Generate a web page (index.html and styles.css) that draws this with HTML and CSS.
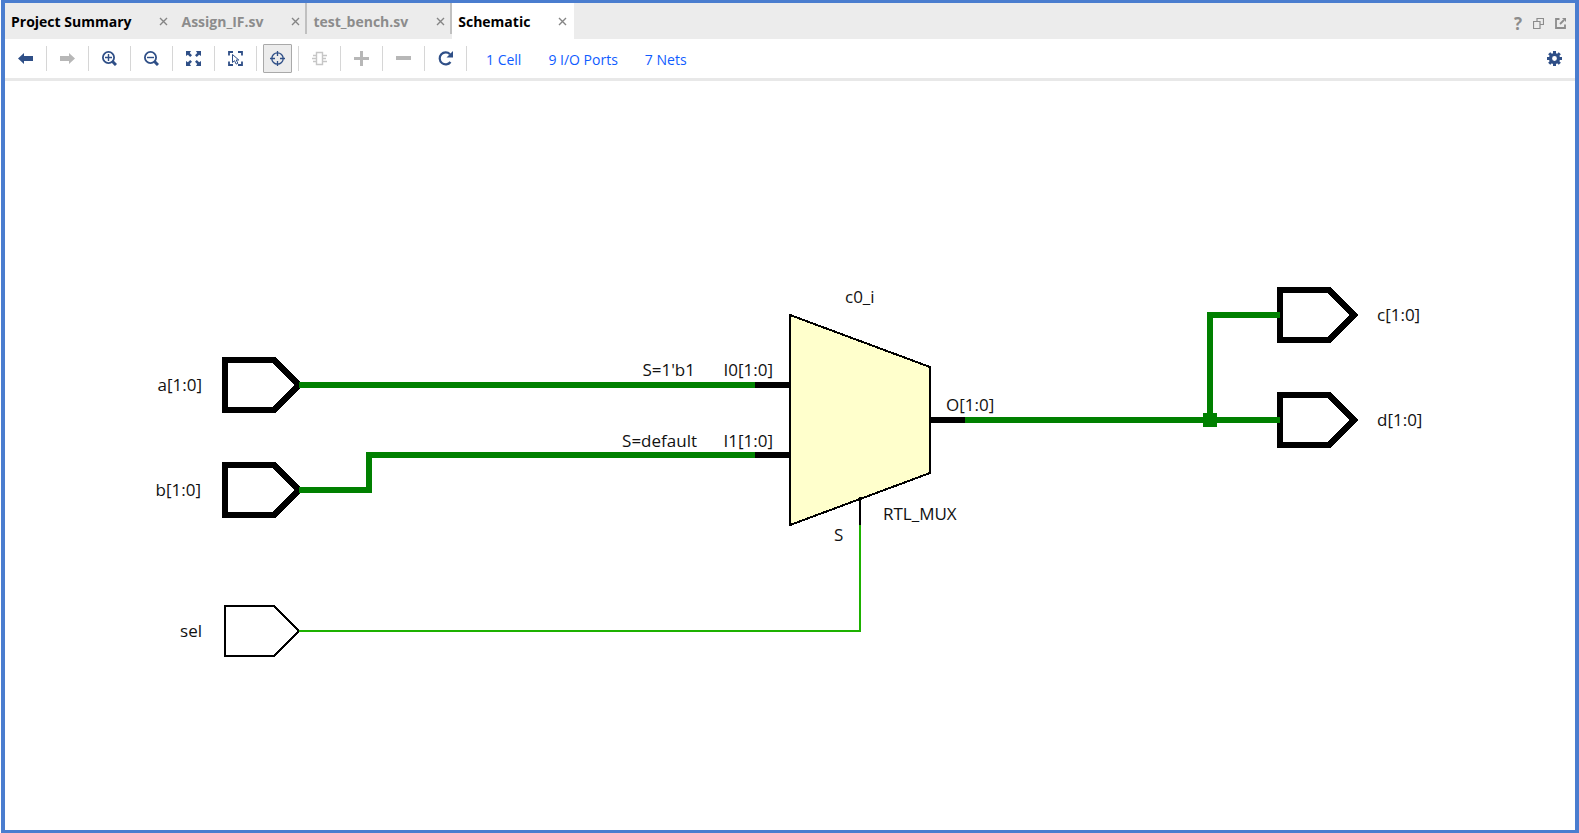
FILE: index.html
```html
<!DOCTYPE html>
<html lang="en">
<head>
<meta charset="utf-8">
<title>Schematic</title>
<link rel="stylesheet" href="styles.css">
</head>
<body>
<main class="window">
  <header class="tabbar">
    <nav class="tabs" aria-label="Open views">
      <div class="tab tab-strong"><a class="tab-name" href="#summary">Project Summary</a><button class="close" aria-label="Close Project Summary"><svg viewBox="0 0 9 9"><path d="M1 1l7 7M8 1l-7 7"/></svg></button></div>
      <div class="tab tab-ruled"><a class="tab-name" href="#assign">Assign_IF.sv</a><button class="close" aria-label="Close Assign_IF.sv"><svg viewBox="0 0 9 9"><path d="M1 1l7 7M8 1l-7 7"/></svg></button></div>
      <div class="tab tab-ruled"><a class="tab-name" href="#bench">test_bench.sv</a><button class="close" aria-label="Close test_bench.sv"><svg viewBox="0 0 9 9"><path d="M1 1l7 7M8 1l-7 7"/></svg></button></div>
      <div class="tab tab-strong tab-active"><a class="tab-name" href="#schematic" aria-current="page">Schematic</a><button class="close" aria-label="Close Schematic"><svg viewBox="0 0 9 9"><path d="M1 1l7 7M8 1l-7 7"/></svg></button></div>
    </nav>
    <div class="window-actions">
      <button class="plain help" aria-label="Help">?</button>
      <button class="plain" aria-label="Float"><svg class="small-icon" viewBox="0 0 11 11"><path class="thin" d="M4 3.500V.5h6.500v6H7.500M.5 3.500h6.500v7h-6.500z"/></svg></button>
      <button class="plain" aria-label="Maximize"><svg class="small-icon" viewBox="0 0 11 11"><path class="mid" d="M4.500 1H1v9h9V6.500"/><path class="mid" d="M5 6l4-4"/><path class="solid" d="M7 0h4v4z"/></svg></button>
    </div>
  </header>

  <div class="toolbar" role="toolbar" aria-label="Schematic tools">
    <button class="tool" aria-label="Back"><svg viewBox="0 0 15 15"><path class="solid" d="M0 7.500L6 2v3h9v5H6v3z"/></svg></button>
    <span class="rule"></span>
    <button class="tool" aria-label="Forward" disabled><svg viewBox="0 0 15 15"><path class="solid" d="M15 7.500L9 2v3H0v5h9v3z"/></svg></button>
    <span class="rule"></span>
    <button class="tool" aria-label="Zoom in"><svg viewBox="0 0 15 15"><circle cx="6.500" cy="6.500" r="5.600" stroke-width="1.800"/><path d="M3 6.500h7M6.500 3v7" stroke-width="1.400"/><path d="M10.500 10.500l3.500 3.500" stroke-width="3"/></svg></button>
    <span class="rule"></span>
    <button class="tool" aria-label="Zoom out"><svg viewBox="0 0 15 15"><circle cx="6.500" cy="6.500" r="5.600" stroke-width="1.800"/><path d="M3 6.500h7" stroke-width="1.400"/><path d="M10.500 10.500l3.500 3.500" stroke-width="3"/></svg></button>
    <span class="rule"></span>
    <button class="tool" aria-label="Zoom fit"><svg viewBox="0 0 15 15"><path class="solid" d="M0 0h5L3.800 1.900 6 4.200 4.200 6 1.900 3.800 0 5zM15 0h-5l1.200 1.900L9 4.200 10.800 6l2.300-2.200L15 5zM0 15h5l-1.200-1.900L6 10.800 4.200 9l-2.300 2.200L0 10zM15 15h-5l1.200-1.900L9 10.800 10.800 9l2.300 2.200L15 10z"/></svg></button>
    <span class="rule"></span>
    <button class="tool" aria-label="Zoom to selection"><svg viewBox="0 0 15 15"><path d="M1 4.500V1h4M10 1h4v3.500M1 10.500V14h4M10 14h4v-3.500" stroke-width="1.800"/><path d="M4.500 3.500v8l2-1.800 1.700 3.400 1.700-.9-1.700-3.200h2.600z" stroke-width="1"/></svg></button>
    <span class="rule"></span>
    <button class="tool tool-on" aria-label="Autofit selection" aria-pressed="true"><svg viewBox="0 0 15 15"><circle cx="7.500" cy="7.500" r="5.700" stroke-width="1.300"/><path d="M7.500 0v5M7.500 10v5M0 7.500h5M10 7.500h5" stroke-width="1.300"/></svg></button>
    <span class="rule"></span>
    <button class="tool tool-faint" aria-label="Expand cell" disabled><svg viewBox="0 0 15 15"><path d="M4.500 1.500h6v12h-6z" stroke-width="1.400"/><path d="M1 4.500h3.500M0 7.500h4.500M1 10.500h3.500M10.500 4.500H15M10.500 7.500H14M10.500 10.500H15" stroke-width="1.300"/></svg></button>
    <span class="rule"></span>
    <button class="tool" aria-label="Add" disabled><svg viewBox="0 0 15 15"><path class="solid" d="M6 0h3v6h6v3H9v6H6V9H0V6h6z"/></svg></button>
    <span class="rule"></span>
    <button class="tool" aria-label="Remove" disabled><svg viewBox="0 0 15 15"><path class="solid" d="M0 5h15v4H0z"/></svg></button>
    <span class="rule"></span>
    <button class="tool" aria-label="Regenerate"><svg viewBox="0 0 15 15"><path d="M12 3.200A6 6 0 1 0 12.500 11" stroke-width="2.200"/><path class="solid" d="M15 0v6.500H8.500z"/></svg></button>
    <span class="rule"></span>
    <div class="counts">
      <a href="#cells">1 Cell</a>
      <a href="#ports">9 I/O Ports</a>
      <a href="#nets">7 Nets</a>
    </div>
    <button class="tool settings" aria-label="Settings"><svg viewBox="0 0 15 15"><circle cx="7.500" cy="7.500" r="4" stroke-width="3.200"/><path d="M7.500 0v3M7.500 12v3M0 7.500h3M12 7.500h3M2.200 2.200l2 2M10.800 10.800l2 2M2.200 12.800l2-2M10.800 4.200l2-2" stroke-width="3"/></svg></button>
  </div>

  <section class="canvas" aria-label="Schematic">
    <svg class="diagram" viewBox="5 81 1570 749">
      <g class="port">
        <path d="M225 360h49l25 25-25 25h-49z"/>
        <path d="M225 465h49l25 25-25 25h-49z"/>
        <path d="M1280 290h49l25 25-25 25h-49z"/>
        <path d="M1280 395h49l25 25-25 25h-49z"/>
      </g>
      <path class="port-thin" d="M225 606h49l25 25-25 25h-49z"/>
      <path class="bus" d="M299 385h456M299 490h70v-35h386M965 420h315M1210 420V315h70"/>
      <path class="junction" d="M1203 413h14v14h-14z"/>
      <path class="net" d="M299 631h561V525"/>
      <path class="mux" d="M790 315l140 52v106l-140 52z"/>
      <path class="pin" d="M755 385h35M755 455h35M930 420h35"/>
      <path class="pin-thin" d="M860 497v28"/>
      <g class="label">
        <text class="end" x="202" y="391">a[1:0]</text>
        <text class="end" x="201" y="496">b[1:0]</text>
        <text class="end" x="202" y="637">sel</text>
        <text class="end" x="695" y="376">S=1'b1</text>
        <text class="end" x="697" y="447">S=default</text>
        <text class="end" x="773" y="376">I0[1:0]</text>
        <text class="end" x="773" y="447">I1[1:0]</text>
        <text x="845" y="303">c0_i</text>
        <text x="946" y="411">O[1:0]</text>
        <text x="883" y="520">RTL_MUX</text>
        <text x="834" y="541">S</text>
        <text x="1377" y="321">c[1:0]</text>
        <text x="1377" y="426">d[1:0]</text>
      </g>
    </svg>
  </section>
</main>
</body>
</html>
```
FILE: styles.css
```css
* {
  box-sizing: border-box;
}

body {
  margin: 0;
  padding-left: 1px;
  background: #fff;
  font-family: "Open Sans", "Noto Sans", sans-serif;
  font-size: 14px;
}

button {
  margin: 0;
  padding: 0;
  border: 0;
  background: none;
  color: inherit;
  font: inherit;
}

a {
  text-decoration: none;
}

svg {
  display: block;
  fill: none;
  stroke: currentColor;
}

.solid {
  fill: currentColor;
  stroke: none;
}

.window {
  display: flex;
  flex-direction: column;
  height: 100vh;
  border: 4px solid #4a7dcf;
  border-width: 3px 4px;
}

.tabbar {
  display: flex;
  flex: none;
  justify-content: space-between;
  height: 36px;
  background: #ececec;
}

.tabs {
  display: flex;
}

.tab {
  position: relative;
  display: flex;
  align-items: center;
  gap: 28px;
  padding: 0 7px 0 6px;
  color: #8c8c8c;
  font-weight: 700;
  white-space: nowrap;
}

.tab-name {
  color: inherit;
}

.tab-strong .tab-name {
  color: #000;
}

.tab-active {
  background: #fff;
}

.tab-ruled::after {
  content: "";
  position: absolute;
  top: 0;
  right: 0;
  width: 2px;
  height: 31px;
  background: #c0c0c0;
}

.close {
  width: 9px;
  color: #858585;
}

.close svg {
  width: 9px;
  height: 9px;
  stroke-width: 1.4;
}

.window-actions {
  display: flex;
  align-items: center;
  gap: 11px;
  padding: 4px 9px 0 0;
  color: #8c8c8c;
}

.help {
  font-size: 17px;
  font-weight: 700;
}

.small-icon {
  width: 11px;
  height: 11px;
}

.thin {
  stroke-width: 1.2;
}

.mid {
  stroke-width: 1.8;
}

.toolbar {
  display: flex;
  flex: none;
  align-items: center;
  gap: 6px;
  height: 42px;
  padding: 0 6px;
  border-bottom: 3px solid #e8e8e8;
}

.tool {
  display: grid;
  flex: none;
  place-items: center;
  width: 29px;
  height: 29px;
  color: #2f4f87;
}

.tool svg {
  width: 15px;
  height: 15px;
}

.tool:disabled {
  color: #b7b7b7;
}

.tool-faint:disabled {
  color: #c6c6c6;
}

.tool-on {
  border: 1px solid #a9a9a9;
  border-radius: 1px;
  background: #ececec;
}

.rule {
  flex: none;
  width: 1px;
  height: 25px;
  background: #d6d6d6;
}

.counts {
  display: flex;
  gap: 27px;
  padding: 2px 0 0 13px;
  white-space: nowrap;
}

.counts a {
  color: #0f5cff;
}

.settings {
  margin-left: auto;
}

.canvas {
  flex: 1;
  min-height: 0;
}

.diagram {
  width: 100%;
  height: 100%;
  shape-rendering: crispEdges;
}

.port {
  stroke: #000;
  stroke-width: 6;
}

.port-thin,
.pin-thin {
  stroke: #000;
  stroke-width: 2;
}

.bus {
  stroke: #008000;
  stroke-width: 6;
}

.junction {
  fill: #008000;
  stroke: none;
}

.net {
  stroke: #1db100;
  stroke-width: 2;
}

.mux {
  fill: #ffffcc;
  stroke: #000;
  stroke-width: 2;
}

.pin {
  stroke: #000;
  stroke-width: 6;
}

.label {
  fill: #111;
  stroke: none;
  font-size: 17px;
}

.end {
  text-anchor: end;
}
```
